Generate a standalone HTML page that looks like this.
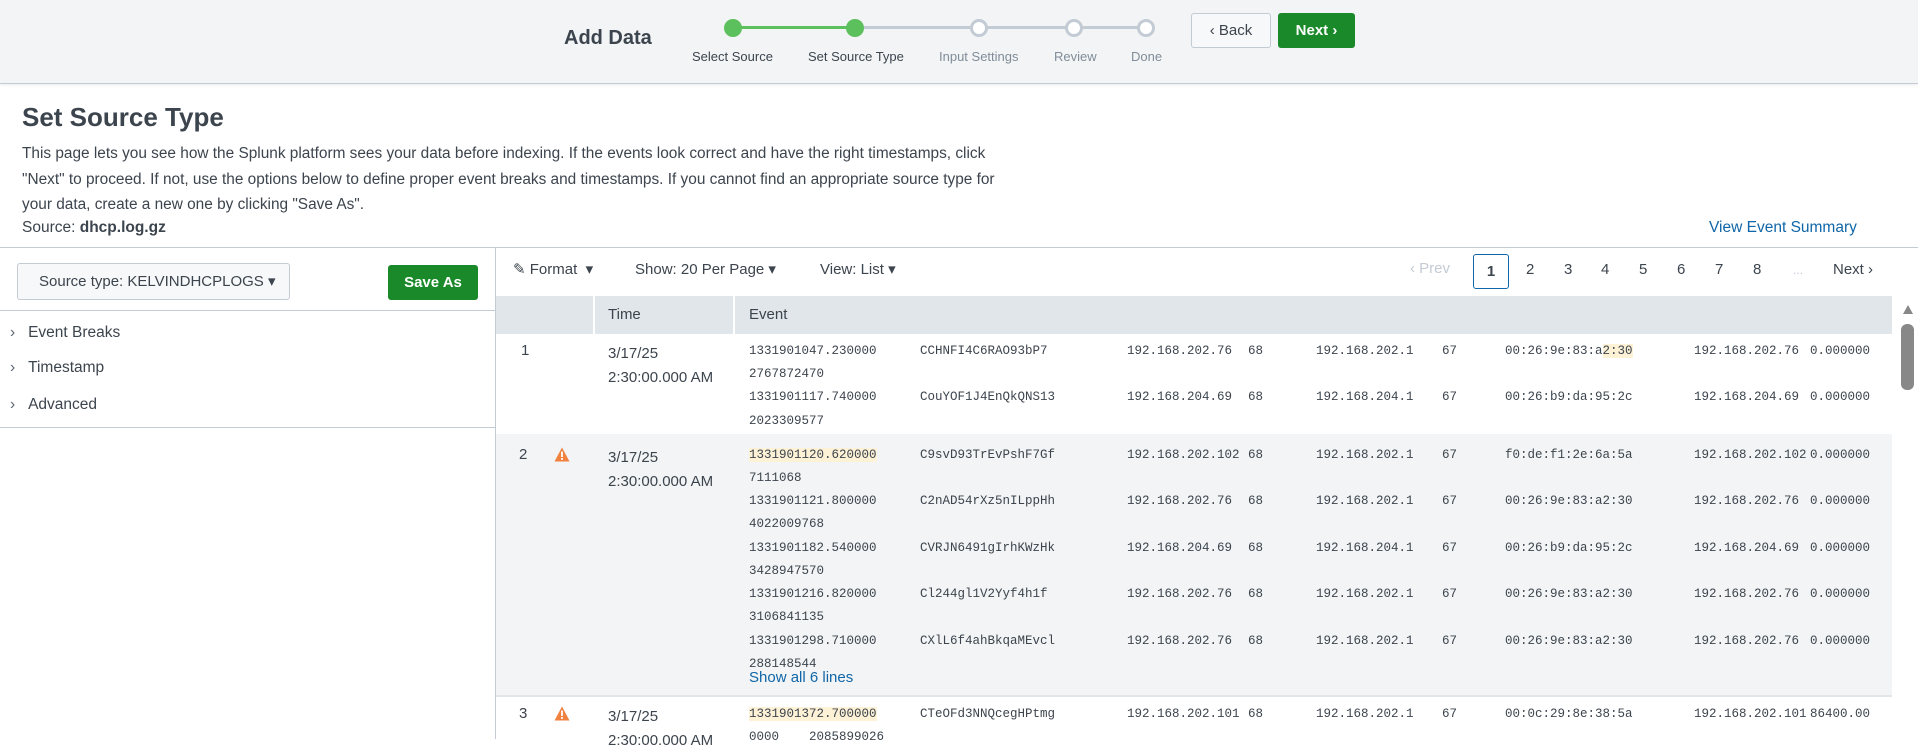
<!DOCTYPE html>
<html><head><meta charset="utf-8"><style>
*{box-sizing:border-box;margin:0;padding:0}
body{width:1918px;height:739px;overflow:hidden;background:#fff;font-family:"Liberation Sans",sans-serif;color:#3c444d;position:relative}
.a{position:absolute;white-space:nowrap}
.hdr{position:absolute;left:0;top:0;width:1918px;height:84px;background:#f2f4f5;border-bottom:1px solid #c3cbd4;box-shadow:0 1px 3px rgba(0,0,0,.08)}
.dot{position:absolute;width:18px;height:18px;border-radius:50%;top:19px}
.dg{background:#5cc05c}
.dw{background:#fff;border:3px solid #c3cbd4}
.lbl{font-size:13px;color:#5c6773;top:49px}
.mono{font-family:"Liberation Mono",monospace;font-size:12.5px;color:#3c444d}
.hl{background:#fdf1d6}
.sep{position:absolute;background:#c3cbd4}
</style></head><body>
<div class="hdr">
 <div class="a" style="left:564px;top:27px;font-size:20px;font-weight:bold;color:#3c444d">Add Data</div>
 <div class="a" style="left:733px;top:26px;width:122px;height:3px;background:#5cc05c"></div>
 <div class="a" style="left:855px;top:26px;width:291px;height:3px;background:#c3cbd4"></div>
 <div class="dot dg" style="left:724px"></div>
 <div class="dot dg" style="left:846px"></div>
 <div class="dot dw" style="left:970px"></div>
 <div class="dot dw" style="left:1065px"></div>
 <div class="dot dw" style="left:1137px"></div>
 <div class="a lbl" style="left:692px;color:#3c444d">Select Source</div>
 <div class="a lbl" style="left:808px;color:#3c444d">Set Source Type</div>
 <div class="a lbl" style="left:939px;color:#818d99">Input Settings</div>
 <div class="a lbl" style="left:1054px;color:#818d99">Review</div>
 <div class="a lbl" style="left:1131px;color:#818d99">Done</div>
 <div class="a" style="left:1191px;top:13px;width:80px;height:35px;border:1px solid #c3cbd4;border-radius:3px;background:#f7f8fa;font-size:15px;text-align:center;line-height:33px;color:#3c444d">&#8249; Back</div>
 <div class="a" style="left:1278px;top:13px;width:77px;height:35px;border-radius:3px;background:#1a8929;font-size:15px;font-weight:bold;text-align:center;line-height:35px;color:#fff">Next &#8250;</div>
</div>
<div class="a" style="left:22px;top:102px;font-size:26px;font-weight:bold;color:#3c444d">Set Source Type</div>
<div class="a" style="left:22px;top:141px;font-size:15.4px;line-height:25.5px;color:#3c444d">This page lets you see how the Splunk platform sees your data before indexing. If the events look correct and have the right timestamps, click<br>"Next" to proceed. If not, use the options below to define proper event breaks and timestamps. If you cannot find an appropriate source type for<br>your data, create a new one by clicking "Save As".</div>
<div class="a" style="left:22px;top:219px;font-size:15.5px">Source: <b>dhcp.log.gz</b></div>
<div class="a" style="left:1709px;top:219px;font-size:15.5px;color:#1066a8">View Event Summary</div>
<div class="sep" style="left:0;top:247px;width:1918px;height:1px"></div>
<div class="sep" style="left:495px;top:247px;width:1px;height:492px"></div>
<div class="a" style="left:17px;top:263px;width:273px;height:37px;border:1px solid #c3cbd4;border-radius:3px;background:#f7f8fa;font-size:15px;line-height:35px;padding-left:21px;color:#3c444d">Source type: KELVINDHCPLOGS &#9662;</div>
<div class="a" style="left:388px;top:265px;width:90px;height:35px;border-radius:3px;background:#1a8929;color:#fff;font-weight:bold;font-size:15px;text-align:center;line-height:35px">Save As</div>
<div class="sep" style="left:0;top:310px;width:495px;height:1px"></div>
<div class="a" style="left:10px;top:324px;font-size:15.5px;color:#3c444d"><span style="color:#5c6773">&#8250;</span>&nbsp;&nbsp;&nbsp;Event Breaks</div>
<div class="a" style="left:10px;top:359px;font-size:15.5px;color:#3c444d"><span style="color:#5c6773">&#8250;</span>&nbsp;&nbsp;&nbsp;Timestamp</div>
<div class="a" style="left:10px;top:396px;font-size:15.5px;color:#3c444d"><span style="color:#5c6773">&#8250;</span>&nbsp;&nbsp;&nbsp;Advanced</div>
<div class="sep" style="left:0;top:427px;width:495px;height:1px"></div>
<div class="a" style="left:513px;top:260px;font-size:15px;color:#3c444d">&#9998; Format &nbsp;&#9662;</div>
<div class="a" style="left:635px;top:260px;font-size:15px">Show: 20 Per Page &#9662;</div>
<div class="a" style="left:820px;top:260px;font-size:15px">View: List &#9662;</div>
<div class="a" style="left:1410px;top:260px;font-size:15px;color:#c3cbd4">&#8249; Prev</div>
<div class="a" style="left:1473px;top:254px;width:36px;height:35px;border:1px solid #1066a8;border-radius:3px;text-align:center;line-height:33px;font-size:15px;font-weight:bold;color:#3c444d">1</div>
<div class="a" style="left:1526px;top:261px;font-size:15px">2</div>
<div class="a" style="left:1564px;top:261px;font-size:15px">3</div>
<div class="a" style="left:1601px;top:261px;font-size:15px">4</div>
<div class="a" style="left:1639px;top:261px;font-size:15px">5</div>
<div class="a" style="left:1677px;top:261px;font-size:15px">6</div>
<div class="a" style="left:1715px;top:261px;font-size:15px">7</div>
<div class="a" style="left:1753px;top:261px;font-size:15px">8</div>
<div class="a" style="left:1793px;top:263px;font-size:12px;color:#c3cbd4">...</div>
<div class="a" style="left:1833px;top:261px;font-size:15px">Next &#8250;</div>
<div class="a" style="left:496px;top:296px;width:1396px;height:38px;background:#e1e6eb"></div>
<div class="a" style="left:593px;top:296px;width:2px;height:38px;background:#fff"></div>
<div class="a" style="left:733px;top:296px;width:2px;height:38px;background:#fff"></div>
<div class="a" style="left:608px;top:306px;font-size:15px">Time</div>
<div class="a" style="left:749px;top:306px;font-size:15px">Event</div>
<div class="a" style="left:496px;top:434px;width:1396px;height:261px;background:#f2f4f5"></div>
<div class="a" style="left:496px;top:695px;width:1396px;height:2px;background:#e1e6eb"></div>
<div class="a" style="left:1892px;top:296px;width:26px;height:443px;background:#fff"></div>
<div class="a" style="left:1903px;top:305px;width:0;height:0;border-left:5px solid transparent;border-right:5px solid transparent;border-bottom:9px solid #888"></div>
<div class="a" style="left:1901px;top:324px;width:13px;height:66px;border-radius:6px;background:#888"></div>
<div class="a" style="left:521px;top:342px;font-size:15px">1</div>
<div class="a" style="left:608px;top:342px;font-size:15px;line-height:23.5px">3/17/25<br>2:30:00.000 AM</div>
<div class="a" style="left:519px;top:446px;font-size:15px">2</div>
<div class="a" style="left:608px;top:446px;font-size:15px;line-height:23.5px">3/17/25<br>2:30:00.000 AM</div>
<div class="a" style="left:519px;top:705px;font-size:15px">3</div>
<div class="a" style="left:608px;top:705px;font-size:15px;line-height:23.5px">3/17/25<br>2:30:00.000 AM</div>
<svg class="a" style="left:554px;top:447px" width="16" height="15" viewBox="0 0 16 15"><path d="M8 0.5 L15.5 14.5 L0.5 14.5 Z" fill="#f1813f"/><rect x="7.1" y="4.5" width="1.8" height="5.5" fill="#fff"/><rect x="7.1" y="11" width="1.8" height="1.8" fill="#fff"/></svg>
<svg class="a" style="left:554px;top:706px" width="16" height="15" viewBox="0 0 16 15"><path d="M8 0.5 L15.5 14.5 L0.5 14.5 Z" fill="#f1813f"/><rect x="7.1" y="4.5" width="1.8" height="5.5" fill="#fff"/><rect x="7.1" y="11" width="1.8" height="1.8" fill="#fff"/></svg>
<div id="ev"></div>
<script>
var X=[749,920,1127,1248,1316,1442,1505,1694,1810];
var L=[
[342,["1331901047.230000","CCHNFI4C6RAO93bP7","192.168.202.76","68","192.168.202.1","67","00:26:9e:83:a<span class=hl>2:30</span>","192.168.202.76","0.000000"]],
[365,["2767872470"]],
[388,["1331901117.740000","CouYOF1J4EnQkQNS13","192.168.204.69","68","192.168.204.1","67","00:26:b9:da:95:2c","192.168.204.69","0.000000"]],
[412,["2023309577"]],
[446,["<span class=hl>1331901120.620000</span>","C9svD93TrEvPshF7Gf","192.168.202.102","68","192.168.202.1","67","f0:de:f1:2e:6a:5a","192.168.202.102","0.000000"]],
[469,["7111068"]],
[492,["1331901121.800000","C2nAD54rXz5nILppHh","192.168.202.76","68","192.168.202.1","67","00:26:9e:83:a2:30","192.168.202.76","0.000000"]],
[515,["4022009768"]],
[539,["1331901182.540000","CVRJN6491gIrhKWzHk","192.168.204.69","68","192.168.204.1","67","00:26:b9:da:95:2c","192.168.204.69","0.000000"]],
[562,["3428947570"]],
[585,["1331901216.820000","Cl244gl1V2Yyf4h1f","192.168.202.76","68","192.168.202.1","67","00:26:9e:83:a2:30","192.168.202.76","0.000000"]],
[608,["3106841135"]],
[632,["1331901298.710000","CXlL6f4ahBkqaMEvcl","192.168.202.76","68","192.168.202.1","67","00:26:9e:83:a2:30","192.168.202.76","0.000000"]],
[655,["288148544"]],
[705,["<span class=hl>1331901372.700000</span>","CTeOFd3NNQcegHPtmg","192.168.202.101","68","192.168.202.1","67","00:0c:29:8e:38:5a","192.168.202.101","86400.00"]],
[728,["0000&nbsp;&nbsp;&nbsp;&nbsp;2085899026"]]
];
var h="";
L.forEach(function(r){r[1].forEach(function(t,i){h+='<div class="a mono" style="left:'+X[i]+'px;top:'+(r[0]+2)+'px">'+t+'</div>';});});
h+='<div class="a" style="left:749px;top:669px;font-size:15px;color:#1066a8">Show all 6 lines</div>';
document.getElementById("ev").innerHTML=h;
</script>
</body></html>
